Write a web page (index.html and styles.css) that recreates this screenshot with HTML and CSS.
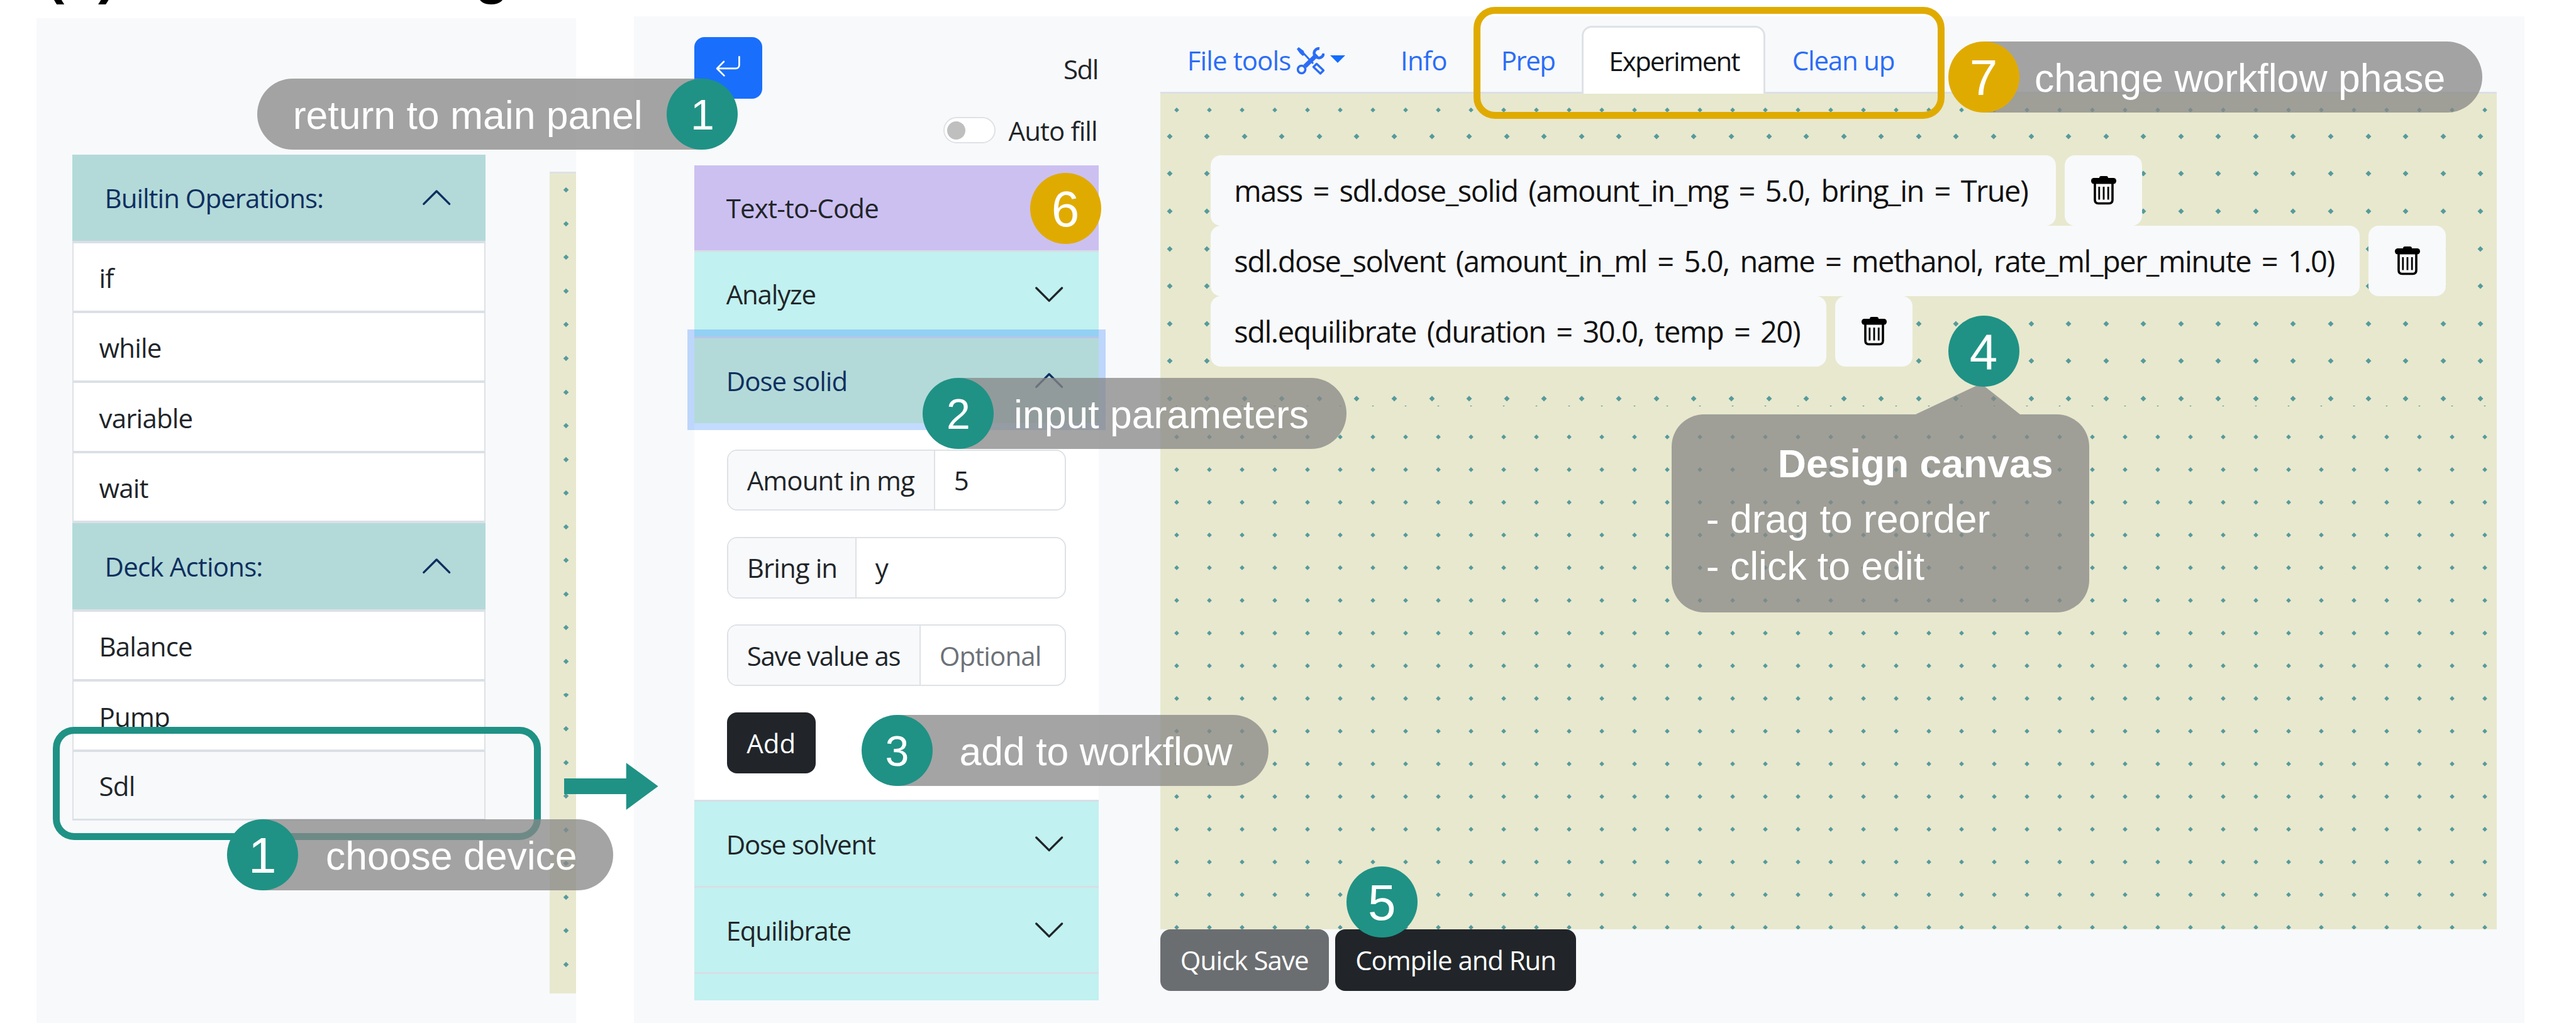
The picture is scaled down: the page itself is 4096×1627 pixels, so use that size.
FILE: index.html
```html
<!DOCTYPE html>
<html lang="en">
<head>
<meta charset="utf-8">
<title>Workflow design</title>
<link rel="stylesheet" href="styles.css">
</head>
<body>
<svg class="defs" width="0" height="0" aria-hidden="true">
  <symbol id="chevron" viewBox="0 0 16 16"><path fill="none" stroke="currentColor" stroke-linecap="round" stroke-linejoin="round" d="M2 5l6 6 6-6"/></symbol>
  <symbol id="trash" viewBox="0 0 40 46"><rect x="13" y="0" width="14" height="8" rx="3"/><rect x="0" y="3" width="40" height="9.500" rx="4.500"/><path fill="none" stroke="currentColor" stroke-width="3.600" d="M6 11v27q0 5.500 5.500 5.500h17q5.500 0 5.500-5.500V11"/><path fill="none" stroke="currentColor" stroke-width="2.800" d="M12.800 17v20.500M20 17v20.500M27.200 17v20.500"/></symbol>
</svg>
<header class="title"><span class="title-mark">(b)</span><span class="title-text">Workflow design</span></header>
<main class="panels">
  <section class="panel device-panel">
    <div class="ops">
      <div class="ops-head"><span class="t">Builtin Operations:</span><svg class="chev up"><use href="#chevron"/></svg></div>
      <div class="op"><span class="t">if</span></div>
      <div class="op"><span class="t">while</span></div>
      <div class="op"><span class="t">variable</span></div>
      <div class="op"><span class="t">wait</span></div>
      <div class="ops-head"><span class="t">Deck Actions:</span><svg class="chev up"><use href="#chevron"/></svg></div>
      <div class="op"><span class="t">Balance</span></div>
      <div class="op"><span class="t">Pump</span></div>
      <div class="op chosen"><span class="t">Sdl</span></div>
    </div>
    <div class="strip"></div>
  </section>
  <section class="panel editor-panel">
    <aside class="sidebar">
      <div class="side-top">
        <button class="back"><svg viewBox="0 0 16 16"><path d="M14.500 1.500a.5.500 0 0 1 .5.500v4.800a2.500 2.500 0 0 1-2.500 2.500H2.707l3.347 3.346a.5.500 0 0 1-.708.708l-4.200-4.200a.5.500 0 0 1 0-.708l4-4a.5.500 0 1 1 .708.708L2.707 8.300H12.500A1.500 1.500 0 0 0 14 6.800V2a.5.500 0 0 1 .5-.5"/></svg></button>
        <span class="t device">Sdl</span>
      </div>
      <div class="autofill"><span class="switch"></span><span class="t">Auto fill</span></div>
      <div class="accordion">
        <div class="acc text-code"><span class="t">Text-to-Code</span></div>
        <div class="acc"><span class="t">Analyze</span><svg class="chev"><use href="#chevron"/></svg></div>
        <div class="acc open"><span class="t">Dose solid</span><svg class="chev up"><use href="#chevron"/></svg></div>
        <div class="acc-body">
          <div class="field"><label class="amount"><span class="t">Amount in mg</span></label><div class="value"><span class="t">5</span></div></div>
          <div class="field"><label class="bring"><span class="t">Bring in</span></label><div class="value"><span class="t">y</span></div></div>
          <div class="field"><label class="save"><span class="t">Save value as</span></label><div class="value hint"><span class="t">Optional</span></div></div>
          <button class="btn add"><span class="t">Add</span></button>
        </div>
        <div class="acc"><span class="t">Dose solvent</span><svg class="chev"><use href="#chevron"/></svg></div>
        <div class="acc"><span class="t">Equilibrate</span><svg class="chev"><use href="#chevron"/></svg></div>
        <div class="acc rest"></div>
      </div>
    </aside>
    <div class="work">
      <nav class="tabs">
        <a class="tab file"><span class="t">File tools</span><svg class="tools" viewBox="0 0 44 44"><g fill="none" stroke="currentColor"><circle cx="7.600" cy="35.500" r="6" stroke-width="3.600"/><path stroke-width="7" d="M13 30.500L32 12"/><path stroke-width="4.500" d="M36 2.200A7.500 7.500 0 1 0 42.500 10"/><path stroke-width="3" d="M10 9L26 26"/><path stroke-width="3.400" stroke-linejoin="round" d="M26.500 31.500l5-5L42.500 37l-5 5z"/></g><path d="M0 3L3 0l8 6 1.500 6-3 2L5 10z"/></svg><i class="caret"></i></a>
        <a class="tab info"><span class="t">Info</span></a>
        <a class="tab prep"><span class="t">Prep</span></a>
        <a class="tab active"><span class="t">Experiment</span></a>
        <a class="tab clean"><span class="t">Clean up</span></a>
      </nav>
      <div class="canvas">
        <div class="steps">
          <div class="step"><div class="call one"><span class="t">mass = sdl.dose_solid (amount_in_mg = 5.0, bring_in = True)</span></div><button class="del"><svg><use href="#trash"/></svg></button></div>
          <div class="step"><div class="call two"><span class="t">sdl.dose_solvent (amount_in_ml = 5.0, name = methanol, rate_ml_per_minute = 1.0)</span></div><button class="del"><svg><use href="#trash"/></svg></button></div>
          <div class="step"><div class="call three"><span class="t">sdl.equilibrate (duration = 30.0, temp = 20)</span></div><button class="del"><svg><use href="#trash"/></svg></button></div>
        </div>
      </div>
      <div class="actions">
        <button class="btn quick"><span class="t">Quick Save</span></button>
        <button class="btn run"><span class="t">Compile and Run</span></button>
      </div>
    </div>
  </section>
</main>

<div class="frame frame-device"></div>
<div class="frame frame-phase"></div>
<svg class="arrow" viewBox="0 0 150 75"><path d="M0 25h99V0l51 37.500L99 75V50H0z"/></svg>
<div class="pill pill-return"><span class="t">return to main panel</span></div><b class="num num-return">1</b>
<div class="pill pill-choose"><span class="t">choose device</span></div><b class="num big num-choose">1</b>
<div class="pill pill-input"><span class="t">input parameters</span></div><b class="num num-input">2</b>
<div class="pill pill-add"><span class="t">add to workflow</span></div><b class="num num-add">3</b>
<div class="pill pill-phase"><span class="t">change workflow phase</span></div><b class="num big gold num-phase">7</b>
<div class="callout">
  <svg class="callout-tip" viewBox="0 0 166 49"><path d="M0 49L104 0l62 49z"/></svg>
  <strong class="t">Design canvas</strong><span class="t">- drag to reorder</span><span class="t">- click to edit</span>
</div>
<b class="num big num-canvas">4</b>
<b class="num big num-run">5</b>
<b class="num big gold num-code">6</b>
</body>
</html>
```
FILE: styles.css
```css
* { box-sizing: border-box; }
html, body { margin: 0; }
body {
  position: relative;
  width: 4096px;
  height: 1627px;
  overflow: hidden;
  background: #fff;
  color: #212529;
  font: 42px/65px "Open Sans", "Noto Sans", sans-serif;
}
button { margin: 0; padding: 0; border: 0; font: inherit; color: inherit; letter-spacing: inherit; }
.defs { position: absolute; }
.t { white-space: nowrap; }

.title {
  display: flex;
  gap: 40px;
  height: 26px;
  padding-left: 73px;
  color: #000;
  font: bold 88px/88px "Liberation Sans", Arial, sans-serif;
}
.title span { margin-top: -85px; white-space: nowrap; }
.title-text { letter-spacing: -5px; }

.panels { display: flex; padding-left: 57.500px; height: 1601px; letter-spacing: -.9px; }
.panel { display: flex; align-items: flex-start; background: #f8f9fb; }
.device-panel { width: 858.500px; margin-top: 2.700px; letter-spacing: -.8px; }
.editor-panel { width: 3006.300px; margin-left: 91.500px; }

/* device list */
.ops { width: 658px; margin: 217px 0 0 57px; }
.ops-head {
  display: flex;
  align-items: center;
  justify-content: space-between;
  height: 141.100px;
  padding: 0 51px 0 52px;
  background: #b3dad9;
  border-bottom: 4px solid #dbe0e6;
  color: #0f2f5f;
}
.ops-head:first-child { letter-spacing: -1px; }
.op {
  display: flex;
  align-items: center;
  height: 111.300px;
  padding: 2px 0 0 41px;
  background: #fff;
  border: 2px solid #dee2e6;
  border-top: 0;
  border-bottom: 4px solid #dbe0e6;
}
.op.chosen { height: 109.500px; background: #f8f9fb; border-bottom-width: 3px; }
.chev { width: 54.400px; height: 54.400px; }
.chev.up { transform: rotate(180deg); }
.strip {
  width: 42.500px;
  height: 1307px;
  margin: 244.700px 0 0 101.300px;
  border-top: 3px solid #dee2e6;
  background: #e8e8ce url("data:image/svg+xml,%3Csvg xmlns='http://www.w3.org/2000/svg' width='53.55' height='53.55'%3E%3Cpath fill='%23559b9c' d='M26.8 22.500l4.300 4.300-4.300 4.300-4.300-4.300z'/%3E%3C/svg%3E") -0.600px -0.500px / 53.550px 53.550px;
}

/* sidebar */
.sidebar { width: 642.600px; margin: 33px 0 0 96.700px; }
.side-top { display: flex; justify-content: space-between; align-items: center; height: 97.700px; }
.back { width: 107.800px; height: 97.700px; border-radius: 16px; background: #196ffb; color: #fff; }
.back svg { display: block; width: 43.500px; height: 43.500px; margin: -2px 0 0 32px; fill: currentColor; }
.device { padding: 4px 1px 0 0; letter-spacing: -1.500px; }
.autofill { display: flex; align-items: center; justify-content: flex-end; gap: 20px; height: 65px; margin-top: 18px; padding-right: 2px; }
.switch { display: flex; align-items: center; width: 83px; height: 42px; padding-left: 4px; border: 2.700px solid #dee2e6; border-radius: 21px; background: #fff; }
.switch::before { content: ""; width: 29px; height: 29px; border-radius: 50%; background: #bfbfbf; }
.accordion { margin-top: 23px; background: #fff; }
.acc {
  display: flex;
  align-items: center;
  justify-content: space-between;
  height: 137px;
  padding: 0 51px 0 50.500px;
  background: #c1f1f0;
  border-top: 3px solid #d6dfe5;
  letter-spacing: -1.200px;
}
.acc.text-code { height: 135.200px; background: #ccc0f1; border-top: 0; letter-spacing: -.8px; }
.acc.open { position: relative; height: 138px; background: #b3dad9; color: #0f2f5f; border-top-color: #b8c5ea; box-shadow: 0 0 0 11px rgba(13, 110, 253, .25); letter-spacing: -1px; }
.acc.rest { height: 45px; }
.acc-body { display: flex; flex-direction: column; align-items: flex-start; gap: 41.800px; height: 599.500px; padding: 42.200px 52px 0 51.500px; }
.field { display: flex; width: 539px; height: 97.400px; border: 2.700px solid #dee2e6; border-radius: 16px; background: #fff; overflow: hidden; }
.field label, .value { display: flex; align-items: center; padding-left: 30px; }
.field label { background: #f8f9fb; border-right: 2.700px solid #dee2e6; }
.amount { width: 329px; }
.bring { width: 204px; }
.save { width: 306px; letter-spacing: -1.300px; }
.hint { color: #6c7177; }
.btn { display: flex; align-items: center; justify-content: center; height: 97.500px; border-radius: 16px; background: #212529; color: #fff; }
.add { width: 141px; letter-spacing: 0; }

/* work area */
.work { width: 2125.200px; margin-left: 98px; }
.tabs { display: flex; align-items: flex-end; height: 123px; border-bottom: 3px solid #dbe0e6; color: #2b6df6; }
.tab { display: flex; align-items: center; height: 108.500px; margin-bottom: -3px; padding: 2px 0 0 43px; }
.file { width: 341.200px; }
.info { width: 159.800px; padding-left: 41px; letter-spacing: -.8px; }
.prep { width: 169.400px; padding-left: 41px; letter-spacing: -1.500px; }
.tab.active { width: 291.600px; background: #fff; color: #111417; border: 3px solid #dee2e6; border-bottom: 0; border-radius: 16px 16px 0 0; padding: 0 0 0 40px; letter-spacing: -1.800px; }
.clean { width: 246px; letter-spacing: -1.200px; }
.tools { width: 44px; height: 44px; margin: 2px 0 0 10px; fill: currentColor; }
.caret { margin: -3px 0 0 9px; border: 12px solid transparent; border-top: 12px solid; border-bottom: 0; color: #146cfd; }
.canvas {
  height: 1329px;
  padding-top: 38px;
  background: #e8e8ce url("data:image/svg+xml,%3Csvg xmlns='http://www.w3.org/2000/svg' width='52' height='52'%3E%3Cpath fill='%23559b9c' d='M26 22l3.900 3.900-3.900 3.900-3.900-3.900z'/%3E%3C/svg%3E") 0 0 / 52px 52px;
}
.steps {
  height: 458px;
  padding: 60.300px 0 0 80.500px;
  background: #e8e8ce url("data:image/svg+xml,%3Csvg xmlns='http://www.w3.org/2000/svg' width='59.6' height='59.6'%3E%3Cpath fill='%23559b9c' d='M29.8 25.300l4.500 4.500-4.500 4.500-4.500-4.500z'/%3E%3C/svg%3E") -15.200px 0 / 59.570px 59.600px;
}
.step { display: flex; gap: 14px; height: 111.900px; color: #111; font-size: 47px; }
.call { display: flex; align-items: center; padding: 1px 0 0 37px; border-radius: 16px; background: #f8f9fb; letter-spacing: -1.500px; word-spacing: 6px; }
.one { width: 1343.500px; }
.two { width: 1826.500px; }
.three { width: 978.500px; }
.del { width: 123.500px; border-radius: 16px; background: #f8f9fb; color: #000; }
.del svg { display: block; width: 40px; height: 46px; margin: 0 auto; fill: currentColor; }
.actions { display: flex; gap: 10.500px; }
.quick { width: 268px; background: #6b6e71; }
.run { width: 382.500px; letter-spacing: -1.100px; }

/* annotations */
.frame { position: absolute; border: 11.700px solid #1f9285; border-radius: 34px; }
.frame-device { left: 83.600px; top: 1155.700px; width: 776px; height: 180px; }
.frame-phase { left: 2342.700px; top: 10.900px; width: 749.700px; height: 178.500px; border-color: #e0ab00; }
.arrow { position: absolute; left: 897px; top: 1212.500px; width: 149.500px; height: 75px; fill: #1f9285; }
.pill {
  position: absolute;
  height: 113px;
  padding-top: 4px;
  border-radius: 0 56.500px 56.500px 0;
  background: rgba(136, 136, 136, .76);
  color: #fff;
  font: 62.500px/109px "Liberation Sans", Arial, sans-serif;
}
.pill-return { left: 408.800px; top: 125px; width: 708px; padding-left: 57px; border-radius: 56.500px 0 0 56.500px; }
.pill-choose { left: 417px; top: 1303px; width: 558px; padding-left: 101px; }
.pill-input { left: 1524px; top: 600.500px; width: 616.700px; padding-left: 88px; }
.pill-add { left: 1426.500px; top: 1137px; width: 590px; padding-left: 99px; }
.pill-phase { left: 3154px; top: 66px; width: 793.200px; padding-left: 81px; }
.num {
  position: absolute;
  width: 113px;
  height: 113px;
  padding-top: 3px;
  border-radius: 50%;
  background: #1f9285;
  color: #fff;
  font: 68px/109px "Liberation Sans", Arial, sans-serif;
  text-align: center;
}
.num.big { font-size: 80px; }
.num.gold { background: #e0ab00; }
.num-return { left: 1060.400px; top: 125px; }
.num-choose { left: 360.800px; top: 1303px; }
.num-input { left: 1467.300px; top: 600.500px; }
.num-add { left: 1370px; top: 1137px; }
.num-phase { left: 3097.600px; top: 66px; }
.num-canvas { left: 3097.600px; top: 502px; }
.num-run { left: 2140.800px; top: 1377.700px; }
.num-code { left: 1637.500px; top: 275.300px; }
.callout {
  position: absolute;
  left: 2657.800px;
  top: 658.700px;
  display: flex;
  flex-direction: column;
  align-items: flex-start;
  width: 664.500px;
  height: 315.500px;
  padding: 41px 0 0 55px;
  border-radius: 51.500px;
  background: rgba(136, 136, 136, .76);
  color: #fff;
  font: 62.500px/75px "Liberation Sans", Arial, sans-serif;
}
.callout strong { margin: 0 0 13px 114px; }
.callout-tip { position: absolute; left: 388px; top: -48.700px; width: 166px; height: 49px; fill: rgba(136, 136, 136, .76); }
```
